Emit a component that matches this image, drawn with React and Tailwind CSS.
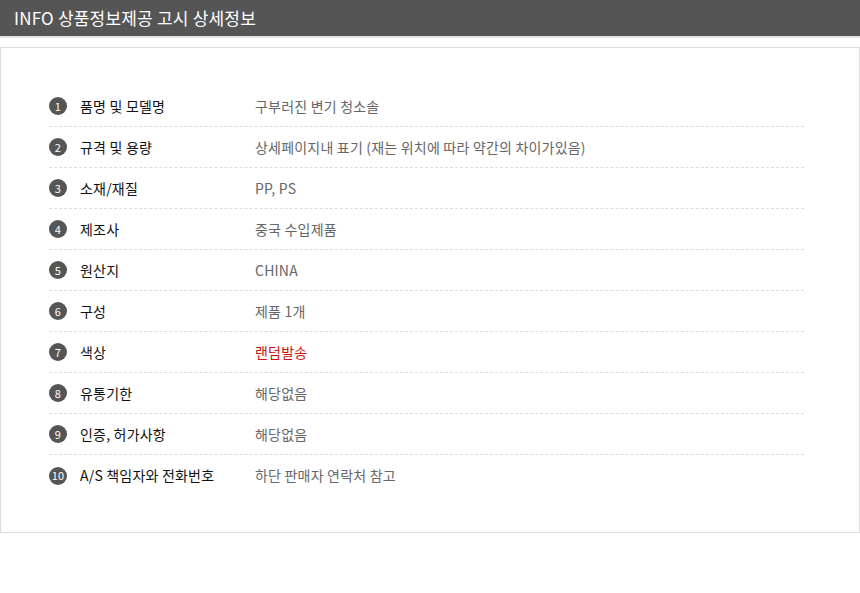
import React from 'react';

const rows = [
  ['품명 및 모델명', '구부러진 변기 청소솔'],
  ['규격 및 용량', '상세페이지내 표기 (재는 위치에 따라 약간의 차이가있음)'],
  ['소재/재질', 'PP, PS'],
  ['제조사', '중국 수입제품'],
  ['원산지', 'CHINA'],
  ['구성', '제품 1개'],
  ['색상', '랜덤발송', true],
  ['유통기한', '해당없음'],
  ['인증, 허가사항', '해당없음'],
  ['A/S 책임자와 전화번호', '하단 판매자 연락처 참고'],
];

export default function App() {
  return (
    <div className="w-[860px] h-[593px] bg-white" style={{ fontFamily: '"Noto Sans CJK KR", "Noto Sans", sans-serif' }}>
      {/* Title bar */}
      <div className="h-[36px] bg-[#555555] flex items-center pl-[14px] text-white text-[17px] tracking-[0.2px]">
        INFO 상품정보제공 고시 상세정보
      </div>
      <div className="h-[2px] bg-[#e6e6e6]" />
      <div className="h-[9px]" />

      {/* Box */}
      <div className="h-[486px] border border-[#dcdcdc] pl-[48px] pr-[55px] pt-[38px]">
        {rows.map(([label, value, red], i) => (
          <div
            key={i}
            className={`h-[41px] flex items-center text-[14px] tracking-[0.2px] ${i < rows.length - 1 ? 'border-b border-dashed border-[#dddddd]' : ''}`}
          >
            <div className="w-[31px] flex items-center">
              <span className="w-[18px] h-[18px] rounded-full bg-[#555555] text-white text-[11px] flex items-center justify-center leading-none">
                {i + 1}
              </span>
            </div>
            <div className="w-[175px] text-[#111111]">{label}</div>
            <div className={red ? 'text-[#cc1111]' : 'text-[#666666]'}>{value}</div>
          </div>
        ))}
      </div>
    </div>
  );
}
